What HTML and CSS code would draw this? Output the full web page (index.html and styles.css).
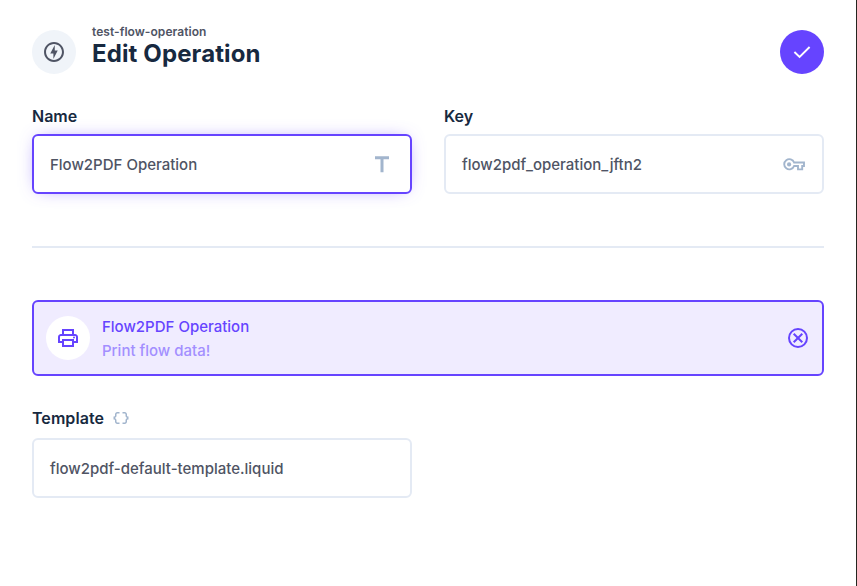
FILE: index.html
```
<!DOCTYPE html>
<html lang="en">
<head>
<meta charset="utf-8">
<title>Edit Operation</title>
<link rel="stylesheet" href="styles.css">
</head>
<body>
<main class="drawer">
  <header class="header">
    <span class="circle header-icon">
      <svg width="24" height="24" viewBox="0 0 24 24" fill="currentColor"><path d="M12 2.02c-5.51 0-9.98 4.47-9.98 9.98s4.47 9.98 9.98 9.98 9.98-4.47 9.98-9.98S17.51 2.02 12 2.02zm0 17.96c-4.4 0-7.98-3.58-7.98-7.98S7.6 4.02 12 4.02 19.98 7.6 19.98 12 16.4 19.98 12 19.98zM12.75 5l-4.5 8.5h3.14V19l4.36-8.5h-3V5z"/></svg>
    </span>
    <div class="titles">
      <div class="subtitle">test-flow-operation</div>
      <h1>Edit Operation</h1>
    </div>
    <button class="circle save" aria-label="Save">
      <svg width="24" height="24" viewBox="0 0 24 24" fill="none" stroke="currentColor" stroke-width="1.9"><path d="m4.4 12 5.2 5L19.6 7"/></svg>
    </button>
  </header>
  <section class="grid">
    <div class="field">
      <div class="label">Name</div>
      <div class="input active"><span>Flow2PDF Operation</span>
        <svg width="24" height="24" viewBox="0 0 24 24" fill="currentColor"><path d="M5 4.3v3h5.5v13h3v-13H19v-3H5z"/></svg>
      </div>
    </div>
    <div class="field">
      <div class="label">Key</div>
      <div class="input"><span>flow2pdf_operation_jftn2</span>
        <svg width="24" height="24" viewBox="0 0 24 24" fill="none" stroke="currentColor" stroke-width="1.9"><path d="M12.1 10.5h9.9v3.5h-1.8v3.4h-4.2v-3.4h-3.9a5.1 5.1 0 1 1 0-3.5z"/><circle cx="7.1" cy="12.4" r="2.1" fill="currentColor" stroke="none"/></svg>
      </div>
    </div>
  </section>
  <hr class="divider">
  <section class="operation">
    <span class="circle operation-icon">
      <svg width="24" height="24" viewBox="0 0 24 24" fill="currentColor"><path d="M19 8h-1V3H6v5H5c-1.66 0-3 1.34-3 3v6h4v4h12v-4h4v-6c0-1.66-1.34-3-3-3zM8 5h8v3H8V5zm8 14H8v-4h8v4zm2-4v-2H6v2H4v-4c0-.55.45-1 1-1h14c.55 0 1 .45 1 1v4h-2z"/><circle cx="18" cy="11.5" r="1"/></svg>
    </span>
    <div class="operation-text"><div>Flow2PDF Operation</div><div class="description">Print flow data!</div></div>
    <svg width="24" height="24" viewBox="0 0 24 24" fill="none" stroke="currentColor" stroke-width="2"><circle cx="12" cy="12" r="9"/><path d="m7.7 7.7 8.6 8.6m0-8.6-8.6 8.6"/></svg>
  </section>
  <section class="grid options">
    <div class="field">
      <div class="label template-label">Template
        <svg width="18" height="18" viewBox="0 0 24 24" fill="currentColor"><path d="M4 7v2c0 .55-.45 1-1 1H2v4h1c.55 0 1 .45 1 1v2c0 1.65 1.35 3 3 3h3v-2H7c-.55 0-1-.45-1-1v-2c0-1.3-.84-2.42-2-2.83v-.34C5.16 11.42 6 10.3 6 9V7c0-.55.45-1 1-1h3V4H7C5.35 4 4 5.35 4 7zm17 3c-.55 0-1-.45-1-1V7c0-1.65-1.35-3-3-3h-3v2h3c.55 0 1 .45 1 1v2c0 1.3.84 2.42 2 2.83v.34c-1.16.41-2 1.52-2 2.83v2c0 .55-.45 1-1 1h-3v2h3c1.65 0 3-1.35 3-3v-2c0-.55.45-1 1-1h1v-4h-1z"/></svg>
      </div>
      <div class="input"><span>flow2pdf-default-template.liquid</span></div>
    </div>
  </section>
</main>
</body>
</html>
```
FILE: styles.css
```
* { box-sizing: border-box; }
body {
  margin: 0;
  background: #fff;
  color: #4f5464;
  font: 500 15px/24px Inter, sans-serif;
}
svg { display: block; flex: none; }
.drawer {
  height: 586px;
  padding: 22px 32px 0;
  border-right: 1px solid #24251f;
}
.header { display: flex; align-items: center; height: 60px; }
.circle {
  display: flex;
  align-items: center;
  justify-content: center;
  flex: none;
  width: 44px;
  height: 44px;
  padding: 0;
  border: 0;
  border-radius: 50%;
}
.header .circle { margin-top: 0.8px; }
.header-icon { background: #f0f4f9; }
.titles { flex: 1; margin-left: 16px; }
.subtitle { font-size: 12px; line-height: 14px; font-weight: 600; margin-top: -12px; letter-spacing: 0.05px; }
h1 {
  margin: 0;
  color: #172940;
  font-size: 24px;
  line-height: 29px;
  font-weight: 700;
  letter-spacing: 0.12px;
}
.save { background: #6644ff; color: #fff; }
.grid {
  display: grid;
  grid-template-columns: 1fr 1fr;
  gap: 32px;
  margin-top: 22px;
}
.label {
  display: flex;
  align-items: center;
  gap: 8px;
  height: 24px;
  margin-bottom: 6px;
  color: #172940;
  font-size: 16px;
  font-weight: 600;
}
.template-label { letter-spacing: 0.06px; }
.label svg, .input svg { color: #a2b5cd; }
.input {
  display: flex;
  align-items: center;
  justify-content: space-between;
  height: 60px;
  padding: 0 16px;
  border: 2px solid #e4eaf4;
  border-radius: 6px;
}
.input span { padding-top: 2px; }
.input.active { border-color: #6644ff; box-shadow: 0 0 18px -7px rgba(102, 68, 255, 0.75); }
.divider { height: 2px; margin: 52px 0; border: 0; background: #e4eaf4; }
.operation {
  display: flex;
  align-items: center;
  height: 76px;
  padding: 0 12px;
  border: 2px solid #6644ff;
  border-radius: 6px;
  background: #f0ecff;
  color: #6644ff;
}
.operation-icon { background: #fff; }
.operation-text { flex: 1; margin-left: 12px; padding-top: 2px; }
.description { color: #a38fff; }
.options { margin-top: 30px; }
.options .label { margin-bottom: 8px; }
```
